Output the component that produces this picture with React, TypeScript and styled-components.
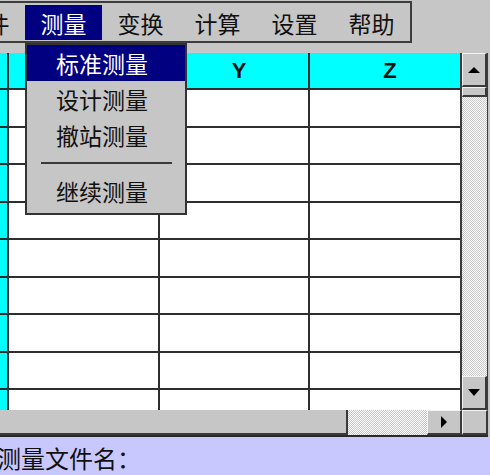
import React from "react";
import styled, { createGlobalStyle, css } from "styled-components";

const GlobalStyle = createGlobalStyle`
  html, body {
    margin: 0;
    padding: 0;
    background: #c6c6c6;
    overflow: hidden;
  }
  * {
    box-sizing: border-box;
  }
`;

const CJK = `"Noto Sans CJK SC", "Noto Sans", sans-serif`;
const DARK = "#2e2e2e";
const FACE = "#c6c6c6";

const Screen = styled.div`
  position: relative;
  width: 490px;
  height: 475px;
  overflow: hidden;
  background: ${FACE};
  display: flex;
  flex-direction: column;
  font-family: ${CJK};
`;

const MenuBar = styled.div`
  display: flex;
  flex-shrink: 0;
  width: 466px;
  height: 42px;
  margin: 1px 0 0 -54px;
  padding-top: 2px;
  border: 2px solid #3c3c3c;
`;

const MenuItem = styled.div<{ $active?: boolean }>`
  width: 77px;
  height: 35px;
  display: flex;
  align-items: center;
  justify-content: center;
  font-size: 23px;
  color: ${(p) => (p.$active ? "#ffffff" : "#111111")};
  background: ${(p) => (p.$active ? "#000080" : "transparent")};
`;

const Dropdown = styled.div`
  position: absolute;
  left: 25px;
  top: 43px;
  width: 162px;
  padding-bottom: 4px;
  background: ${FACE};
  border: 2px solid #333333;
  z-index: 2;
`;

const DropItem = styled.div<{ $active?: boolean }>`
  height: 36px;
  line-height: 36px;
  padding-left: 29px;
  font-size: 23px;
  color: ${(p) => (p.$active ? "#ffffff" : "#111111")};
  background: ${(p) => (p.$active ? "#000080" : "transparent")};
`;

const Separator = styled.div`
  height: 20px;
  display: flex;
  align-items: center;
  padding: 0 13px 0 14px;
  &::before {
    content: "";
    flex: 1;
    height: 2px;
    background: #3a3a3a;
  }
`;

const Main = styled.div`
  display: flex;
  flex-shrink: 0;
  height: 357px;
  margin-top: 10px;
`;

const Grid = styled.div`
  width: 460px;
  height: 357px;
  overflow: hidden;
  display: grid;
  grid-template-columns: 9px 151px 150px 150px;
  grid-template-rows: 37px;
  grid-auto-rows: 37.5px;
  background: #ffffff;
`;

const Cell = styled.div<{ $head?: boolean; $last?: boolean }>`
  border-bottom: 2px solid ${DARK};
  border-right: ${(p) => (p.$last ? "none" : `2px solid ${DARK}`)};
  background: ${(p) => (p.$head ? "#00ffff" : "#ffffff")};
  display: flex;
  align-items: center;
  justify-content: center;
  padding-left: 10px;
  font-family: "Liberation Sans", Arial, sans-serif;
  font-weight: bold;
  font-size: 22px;
  color: #111111;
`;

const RowHead = styled(Cell)`
  background: #00ffff;
  padding: 0;
`;

const bevel = css`
  background: ${FACE};
  border-top: 1px solid #f2f2f2;
  border-left: 1px solid #f2f2f2;
  border-right: 2px solid #3a3a3a;
  border-bottom: 2px solid #3a3a3a;
`;

const dither = css`
  background-color: #ffffff;
  background-image: repeating-conic-gradient(#c6c6c6 0 25%, #ffffff 0 50%);
  background-size: 2px 2px;
`;

const VScroll = styled.div`
  width: 28px;
  height: 357px;
  display: flex;
  flex-direction: column;
  border-left: 2px solid #3a3a3a;
  border-right: 1px solid #3a3a3a;
`;

const ScrollButton = styled.div<{ $w?: number; $h?: number }>`
  ${bevel};
  flex-shrink: 0;
  width: ${(p) => (p.$w ? `${p.$w}px` : "auto")};
  height: ${(p) => (p.$h ? `${p.$h}px` : "auto")};
  display: flex;
  align-items: center;
  justify-content: center;
`;

const Track = styled.div`
  ${dither};
  flex: 1;
`;

const Arrow = styled.span<{ $dir: "up" | "down" | "right" }>`
  width: 0;
  height: 0;
  ${(p) =>
    p.$dir === "up"
      ? css`
          border-left: 6px solid transparent;
          border-right: 6px solid transparent;
          border-bottom: 6px solid #000;
        `
      : p.$dir === "down"
      ? css`
          border-left: 6px solid transparent;
          border-right: 6px solid transparent;
          border-top: 7px solid #000;
        `
      : css`
          border-top: 6px solid transparent;
          border-bottom: 6px solid transparent;
          border-left: 6px solid #000;
        `}
`;

const HScroll = styled.div`
  display: flex;
  flex-shrink: 0;
  height: 27px;
  width: 488px;
  border-bottom: 2px solid #2a2a2a;
`;

const HThumb = styled.div`
  ${bevel};
  border-top: none;
  border-left: none;
  width: 348px;
`;

const Status = styled.div`
  flex: 1;
  background: #c8c8ff;
  display: flex;
  align-items: flex-end;
`;

const StatusText = styled.span`
  margin: 0 0 0 -3px;
  font-size: 24px;
  line-height: 34px;
  color: #111111;
`;

const menus = ["文件", "测量", "变换", "计算", "设置", "帮助"];
const ROWS = 9;

export default function App() {
  return (
    <>
      <GlobalStyle />
      <Screen>
        <MenuBar>
          {menus.map((m) => (
            <MenuItem key={m} $active={m === "测量"}>
              {m}
            </MenuItem>
          ))}
        </MenuBar>

        <Dropdown>
          <DropItem $active>标准测量</DropItem>
          <DropItem>设计测量</DropItem>
          <DropItem>撤站测量</DropItem>
          <Separator />
          <DropItem>继续测量</DropItem>
        </Dropdown>

        <Main>
          <Grid>
            <RowHead $head />
            <Cell $head>X</Cell>
            <Cell $head>Y</Cell>
            <Cell $head $last>
              Z
            </Cell>
            {Array.from({ length: ROWS }).map((_, i) => (
              <React.Fragment key={i}>
                <RowHead />
                <Cell />
                <Cell />
                <Cell $last />
              </React.Fragment>
            ))}
          </Grid>
          <VScroll>
            <ScrollButton $h={34}>
              <Arrow $dir="up" />
            </ScrollButton>
            <ScrollButton $h={10} />
            <Track />
            <ScrollButton $h={34}>
              <Arrow $dir="down" />
            </ScrollButton>
          </VScroll>
        </Main>

        <HScroll>
          <HThumb />
          <Track />
          <ScrollButton $w={35}>
            <Arrow $dir="right" />
          </ScrollButton>
          <ScrollButton $w={26} />
        </HScroll>

        <Status>
          <StatusText>测量文件名：</StatusText>
        </Status>
      </Screen>
    </>
  );
}
